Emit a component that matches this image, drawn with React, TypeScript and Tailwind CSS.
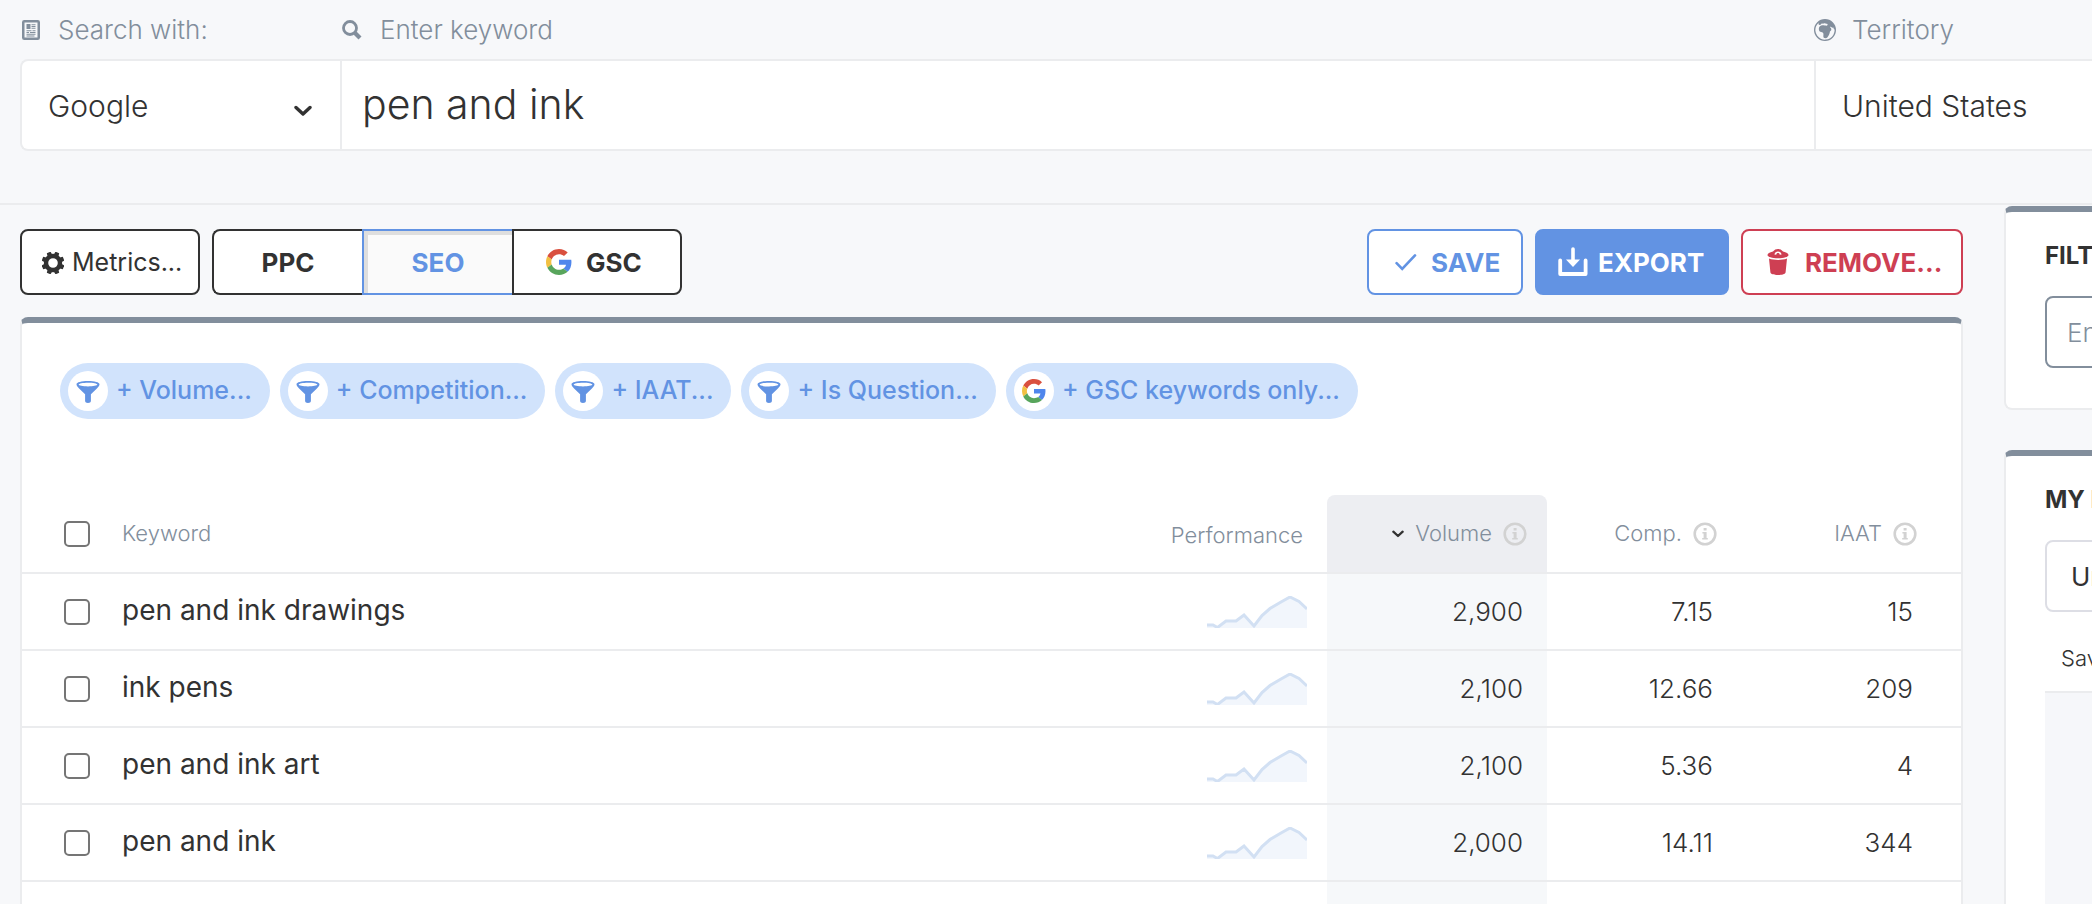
import React from "react";
import { BsGlobeEuropeAfrica } from "react-icons/bs";

type IconProps = { className?: string };

function SheetIcon({ className }: IconProps) {
  return (
    <svg viewBox="0 0 18 20" className={className} aria-hidden="true">
      <rect x="1.25" y="1.25" width="15.5" height="17.5" rx="1" fill="none" stroke="currentColor" strokeWidth="2.5" />
      <rect x="4.5" y="4" width="4" height="5" fill="currentColor" />
      <path d="M9.5 4.75h4M9.5 6.5h4M9.5 8.25h4M4.5 10.75h5M10.5 10.75h3M4.5 12.5h2.5M8 12.5h5.5M4.5 14.25h9M4.5 16h8" stroke="currentColor" strokeWidth="1.1" />
    </svg>
  );
}

function SearchIcon({ className }: IconProps) {
  return (
    <svg viewBox="0 0 20 20" className={className} fill="none" stroke="currentColor" aria-hidden="true">
      <circle cx="8" cy="8" r="6.5" strokeWidth="2.8" />
      <path d="M13 13l5 5" strokeWidth="4.2" />
    </svg>
  );
}

function ChevronIcon({ className }: IconProps) {
  return (
    <svg viewBox="0 0 18 12" className={className} fill="none" stroke="currentColor" strokeWidth="3.4" strokeLinecap="round" strokeLinejoin="round" aria-hidden="true">
      <path d="M2 2.5l7 6.500 7-6.500" />
    </svg>
  );
}

function GearIcon({ className }: IconProps) {
  return (
    <svg viewBox="0 0 22 22" className={className} aria-hidden="true">
      <circle cx="11" cy="11" r="7" fill="none" stroke="currentColor" strokeWidth="4.4" />
      {[22.5, 67.5, 112.5, 157.5, 202.5, 247.5, 292.5, 337.5].map((angle) => (
        <path key={angle} d="M8.4 3.5L9 -0.4h4l.6 3.9z" fill="currentColor" transform={`rotate(${angle} 11 11)`} />
      ))}
    </svg>
  );
}

function GoogleIcon({ className }: IconProps) {
  return (
    <svg viewBox="0 0 48 48" className={className} aria-hidden="true">
      <path fill="#d9503f" d="M24 9.5c3.54 0 6.71 1.22 9.21 3.6l6.85-6.85C35.9 2.38 30.47 0 24 0 14.62 0 6.51 5.38 2.56 13.22l7.98 6.19C12.43 13.72 17.74 9.5 24 9.5z" />
      <path fill="#4f86ec" d="M46.98 24.55c0-1.57-.15-3.09-.38-4.55H24v9.02h12.94c-.58 2.96-2.26 5.48-4.78 7.18l7.73 6c4.51-4.18 7.09-10.36 7.09-17.65z" />
      <path fill="#f2c042" d="M10.53 28.59c-.48-1.45-.76-2.99-.76-4.59s.27-3.14.76-4.59l-7.98-6.19C.92 16.46 0 20.12 0 24c0 3.88.92 7.54 2.56 10.78l7.97-6.19z" />
      <path fill="#58a55c" d="M24 48c6.48 0 11.93-2.13 15.89-5.81l-7.73-6c-2.15 1.45-4.92 2.3-8.16 2.3-6.26 0-11.57-4.22-13.47-9.91l-7.98 6.19C6.51 42.62 14.62 48 24 48z" />
    </svg>
  );
}

function CheckIcon({ className }: IconProps) {
  return (
    <svg viewBox="0 0 22 18" className={className} fill="none" stroke="currentColor" strokeWidth="2.6" strokeLinecap="round" aria-hidden="true">
      <path d="M1.6 10.2L7.2 15.8 20 2.4" />
    </svg>
  );
}

function ExportIcon({ className }: IconProps) {
  return (
    <svg viewBox="0 0 30 30" className={className} aria-hidden="true">
      <path d="M2.2 13.5V27h25.4V13.5" fill="none" stroke="currentColor" strokeWidth="3.8" strokeLinecap="round" strokeLinejoin="round" />
      <path d="M15 2v13" stroke="currentColor" strokeWidth="3.6" strokeLinecap="round" />
      <path d="M8 12.5h14l-7 7.5z" fill="currentColor" />
    </svg>
  );
}

function TrashIcon({ className }: IconProps) {
  return (
    <svg viewBox="0 0 22 26" className={className} aria-hidden="true">
      <path fill="currentColor" d="M2 9.6c2.400 1 5.600 1.400 9 1.400s6.600-.4 9-1.400l-1.400 13.600c-.2 1.800-3.600 2.800-7.600 2.800s-7.400-1-7.600-2.800z" />
      <path fill="currentColor" fillRule="evenodd" d="M6 2.6C7.400 .8 9 0 11 0s3.600.8 5 2.600c3.500.8 5.500 2 5.500 3.400 0 1.900-4.600 3.300-10.500 3.300S.5 7.900.5 6C.5 4.600 2.500 3.400 6 2.600zm1.400 2.800l1.800.4c.2-1.100.8-1.700 1.800-1.700s1.600.6 1.800 1.700l1.800-.4C14.200 3.500 12.900 2.400 11 2.400s-3.200 1.100-3.600 3z" />
    </svg>
  );
}

function FunnelIcon({ className }: IconProps) {
  return (
    <svg viewBox="0 0 24 24" className={className} aria-hidden="true">
      <path fill="currentColor" fillRule="evenodd" d="M12 2C5.500 2 .5 3.300.5 5.300c0 1.400 1 2.700 2.600 4.200l6 5.700V22c0 1.200 1.200 2 2.900 2s2.900-.8 2.900-2v-6.800l6-5.700c1.600-1.500 2.600-2.800 2.600-4.200C23.500 3.300 18.500 2 12 2zm0 1.700c5.200 0 9.300.8 9.300 1.900S17.200 7.500 12 7.500s-9.300-.8-9.300-1.900S6.800 3.700 12 3.700z" />
    </svg>
  );
}

function InfoIcon() {
  return (
    <svg viewBox="0 0 24 24" className="size-6 shrink-0 text-[#d2d2d2]" aria-hidden="true">
      <circle cx="12" cy="12" r="10.3" fill="none" stroke="currentColor" strokeWidth="2.600" />
      <path fill="currentColor" d="M10.600 6h3v2.600h-3zM9.400 10h4.200v6h1.200v1.600H9.200V16h1.400v-4.400H9.400z" />
    </svg>
  );
}

function Sparkline() {
  return (
    <svg viewBox="0 0 100 32" className="ml-auto h-8 w-[100px]" aria-hidden="true">
      <path d="M0 29h6l4.500 2.500L19 25h10l8-6 10 11 8-10.500 8-7L74 6l9-5 9 4.500 8 7.500v19H0z" fill="#f2f6fc" />
      <path d="M0 29h6l4.500 2.500L19 25h10l8-6 10 11 8-10.500 8-7L74 6l9-5 9 4.500 8 7.500" fill="none" stroke="#d2e0f3" strokeWidth="3" />
    </svg>
  );
}

const filters = [
  { label: "+ Volume...", Icon: FunnelIcon },
  { label: "+ Competition...", Icon: FunnelIcon },
  { label: "+ IAAT...", Icon: FunnelIcon },
  { label: "+ Is Question...", Icon: FunnelIcon },
  { label: "+ GSC keywords only...", Icon: GoogleIcon },
];

const rows = [
  { keyword: "pen and ink drawings", volume: "2,900", comp: "7.15", iaat: "15" },
  { keyword: "ink pens", volume: "2,100", comp: "12.66", iaat: "209" },
  { keyword: "pen and ink art", volume: "2,100", comp: "5.36", iaat: "4" },
  { keyword: "pen and ink", volume: "2,000", comp: "14.11", iaat: "344" },
];

const checkbox =
  "block size-[26px] appearance-none rounded-[5px] border-2 border-[#757575] bg-white checked:bg-[#6293e3]";
const card = "border-2 border-t-[6px] border-[#ebecee] border-t-[#828e9c] bg-white";
const actionButton = "flex h-[66px] items-center rounded-lg border-2 text-[26px] font-bold";

function SearchBar() {
  return (
    <form className="border-b-2 border-[#ebecee] pb-[52px] pl-5 text-[#323232]">
      <div className="grid grid-cols-[320px_1fr_278px]">
        <label htmlFor="engine" className="flex h-[59px] items-center gap-[18px] pl-0.5 text-[26px] font-light text-[#828e9c]">
          <SheetIcon className="h-5 w-[18px]" />
          Search with:
        </label>
        <label htmlFor="keyword" className="flex h-[59px] items-center gap-[18px] pl-0.5 text-[26px] font-light text-[#828e9c]">
          <SearchIcon className="size-5" />
          Enter keyword
        </label>
        <label htmlFor="territory" className="flex h-[59px] items-center gap-4 text-[26px] font-light text-[#828e9c]">
          <BsGlobeEuropeAfrica className="size-[22px]" />
          Territory
        </label>
      </div>
      <div className="grid h-[92px] grid-cols-[318px_1fr_278px] rounded-l-lg border-2 border-r-0 border-[#ebecee] bg-white">
        <div className="relative flex">
          <select id="engine" className="w-full appearance-none bg-transparent pt-0.5 pl-[26px] text-[30px] font-light outline-none">
            <option>Google</option>
          </select>
          <ChevronIcon className="pointer-events-none absolute top-1/2 right-7 h-3 w-[18px]" />
        </div>
        <input id="keyword" type="text" defaultValue="pen and ink" className="min-w-0 border-l-2 border-[#ebecee] bg-transparent px-5 text-[41px] font-light outline-none" />
        <select id="territory" className="appearance-none border-l-2 border-[#ebecee] bg-transparent pt-0.5 pl-[26px] text-[30px] font-light outline-none">
          <option>United States</option>
        </select>
      </div>
    </form>
  );
}

function Toolbar() {
  return (
    <div className="flex items-center gap-3 pt-6 pb-[22px]">
      <button type="button" className="flex h-[66px] w-[180px] items-center gap-2 rounded-lg border-2 border-[#323232] bg-white pt-0.5 pl-5 text-[25px]">
        <GearIcon className="size-[22px]" />
        Metrics...
      </button>
      <div className="flex h-[66px] text-[26px] font-bold">
        <button type="button" className="w-[150px] rounded-l-lg border-2 border-r-0 border-[#323232] bg-white">PPC</button>
        <button type="button" className="w-[150px] border-2 border-r-0 border-[#6293e3] bg-[#fafafa] text-[#6293e3] shadow-[inset_4px_4px_0_0_#dedede]">SEO</button>
        <button type="button" className="flex w-[170px] items-center gap-[14px] rounded-r-lg border-2 border-[#323232] bg-white pl-8">
          <GoogleIcon className="size-[26px]" />
          GSC
        </button>
      </div>
      <div className="ml-auto flex gap-3">
        <button type="button" className={`${actionButton} w-[156px] gap-[14px] border-[#6293e3] bg-white pl-[26px] text-[#6293e3]`}>
          <CheckIcon className="h-[18px] w-[22px]" />
          SAVE
        </button>
        <button type="button" className={`${actionButton} w-[194px] gap-2.5 border-[#6293e3] bg-[#6293e3] pl-[21px] text-white`}>
          <ExportIcon className="size-[30px]" />
          EXPORT
        </button>
        <button type="button" className={`${actionButton} w-[222px] gap-4 border-[#ce3f53] bg-white pl-6 text-[#ce3f53]`}>
          <TrashIcon className="h-[26px] w-[22px]" />
          REMOVE...
        </button>
      </div>
    </div>
  );
}

function KeywordTable() {
  return (
    <table className="w-full table-fixed border-collapse">
      <colgroup>
        <col className="w-[100px]" />
        <col />
        <col className="w-[200px]" />
        <col className="w-[220px]" />
        <col className="w-[190px]" />
        <col className="w-[224px]" />
      </colgroup>
      <thead className="text-[22px] text-[#828e9c]">
        <tr className="h-[78px] border-b-2 border-[#ebecee] *:font-light">
          <th className="pl-[42px]">
            <input type="checkbox" aria-label="Select all keywords" className={checkbox} />
          </th>
          <th className="text-left">Keyword</th>
          <th className="pt-1 pr-6 text-right">Performance</th>
          <th className="rounded-t-lg bg-[#edeef2] pr-5">
            <div className="flex items-center justify-end gap-[11px]">
              <ChevronIcon className="h-2 w-3 text-[#323232]" />
              Volume
              <InfoIcon />
            </div>
          </th>
          <th className="pr-5">
            <div className="flex items-center justify-end gap-[11px]">
              Comp.
              <InfoIcon />
            </div>
          </th>
          <th className="pr-11">
            <div className="flex items-center justify-end gap-[11px]">
              IAAT
              <InfoIcon />
            </div>
          </th>
        </tr>
      </thead>
      <tbody className="text-[26px] font-light">
        {rows.map((row) => (
          <tr key={row.keyword} className="h-[77px] border-b-2 border-[#ebecee]">
            <td className="pl-[42px]">
              <input type="checkbox" aria-label={row.keyword} className={checkbox} />
            </td>
            <td className="pb-1 text-[28px] font-normal">{row.keyword}</td>
            <td className="pr-5">
              <Sparkline />
            </td>
            <td className="bg-[#f6f8fa] pr-6 text-right">{row.volume}</td>
            <td className="pr-6 text-right">{row.comp}</td>
            <td className="pr-12 text-right">{row.iaat}</td>
          </tr>
        ))}
        <tr className="h-[77px]">
          <td colSpan={3} />
          <td className="bg-[#f6f8fa]" />
          <td colSpan={2} />
        </tr>
      </tbody>
    </table>
  );
}

function Sidebar() {
  return (
    <aside className="flex w-[88px] shrink-0 flex-col gap-10 overflow-hidden pt-px whitespace-nowrap">
      <section className={`${card} h-[204px] shrink-0 rounded-l-lg border-r-0 pt-[26px] pl-[39px]`}>
        <h2 className="text-[24px] leading-[36px] font-bold">FILTER</h2>
        <input type="text" aria-label="Filter keywords" placeholder="Enter keyword" className="mt-[22px] h-[72px] w-[320px] rounded-lg border-2 border-[#828e9c] pl-5 text-[26px] font-light placeholder:text-[#828e9c]" />
      </section>
      <section className={`${card} flex-1 rounded-tl-lg border-r-0 border-b-0 pt-[26px] pl-[39px]`}>
        <h2 className="text-[24px] leading-[36px] font-bold">MY LISTS</h2>
        <select aria-label="List" className="mt-[22px] h-[72px] w-[320px] appearance-none rounded-lg border-2 border-[#dddee5] bg-white pl-6 text-[26px]">
          <option>Unsorted</option>
        </select>
        <p className="flex h-[81px] items-center border-b-2 border-[#ebecee] pt-[14px] pl-4 text-[22px] font-light">Saved</p>
        <div className="h-[240px] bg-[#f6f7fa]" />
      </section>
    </aside>
  );
}

export default function App() {
  return (
    <div className="flex h-screen flex-col overflow-hidden bg-[#f7f8fa] font-['Inter','Liberation_Sans',sans-serif] text-[#323232]">
      <SearchBar />
      <div className="flex min-h-0 flex-1 gap-[41px] pl-5">
        <main className="flex min-w-0 flex-1 flex-col">
          <Toolbar />
          <section className={`${card} min-h-0 flex-1 rounded-t-lg border-b-0`}>
            <div className="flex gap-2.5 px-[38px] pt-10 pb-[76px]">
              {filters.map(({ label, Icon }) => (
                <button key={label} type="button" className="flex h-14 items-center gap-2 rounded-full bg-[#d1e3fc] pr-[18px] pl-2 text-[25px] font-medium text-[#6293e3]">
                  <span className="flex size-10 items-center justify-center rounded-full bg-white">
                    <Icon className="size-6" />
                  </span>
                  {label}
                </button>
              ))}
            </div>
            <KeywordTable />
          </section>
        </main>
        <Sidebar />
      </div>
    </div>
  );
}
